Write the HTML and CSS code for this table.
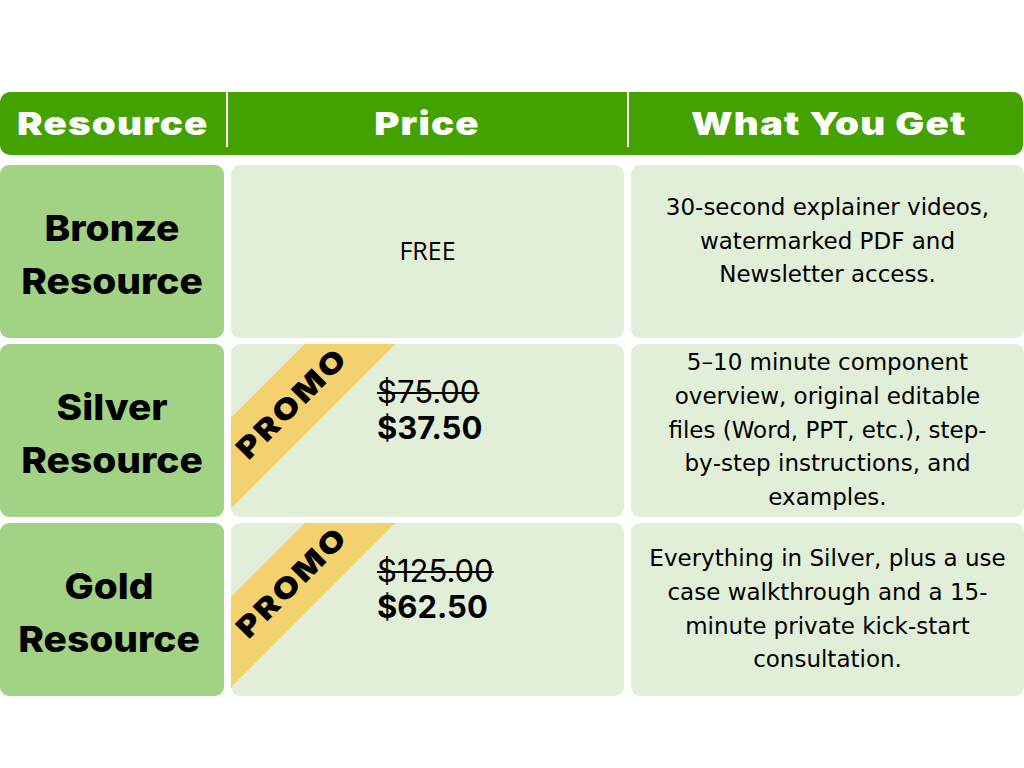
FILE: index.html
```html
<!DOCTYPE html>
<html lang="en">
<head>
<meta charset="utf-8">
<title>Resource Pricing</title>
<link rel="stylesheet" href="styles.css">
</head>
<body>
<div class="table">
  <div class="head">
    <div class="hcell c1"><span>Resource</span></div>
    <div class="divider"></div>
    <div class="hcell c2"><span>Price</span></div>
    <div class="divider"></div>
    <div class="hcell c3"><span>What You Get</span></div>
  </div>

  <div class="row">
    <div class="cell label"><span>Bronze<br>Resource</span></div>
    <div class="cell price center"><span class="free">FREE</span></div>
    <div class="cell desc first">30-second explainer videos, watermarked PDF and Newsletter access.</div>
  </div>

  <div class="row">
    <div class="cell label"><span>Silver<br>Resource</span></div>
    <div class="cell price">
      <div class="ribbon"><span>PROMO</span></div>
      <div class="prices">
        <div class="old">$75.00</div>
        <div class="new">$37.50</div>
      </div>
    </div>
    <div class="cell desc">5–10 minute component overview, original editable<br>files (Word, PPT, etc.), step-by&#8209;step instructions, and examples.</div>
  </div>

  <div class="row">
    <div class="cell label gold"><span>Gold<br>Resource</span></div>
    <div class="cell price">
      <div class="ribbon"><span>PROMO</span></div>
      <div class="prices">
        <div class="old">$125.00</div>
        <div class="new">$62.50</div>
      </div>
    </div>
    <div class="cell desc">Everything in Silver, plus a use case walkthrough and a 15-minute private kick-start consultation.</div>
  </div>
</div>
</body>
</html>
```

FILE: styles.css
```css
* { box-sizing: border-box; }

html, body {
  margin: 0;
  padding: 0;
  background: #ffffff;
}

body {
  width: 1024px;
  height: 768px;
  overflow: hidden;
  font-family: "DejaVu Sans", "Open Sans", sans-serif;
  color: #000;
}

.table {
  padding-top: 92px;
  display: flex;
  flex-direction: column;
  gap: 6px;
}

.head {
  display: flex;
  height: 63px;
  background: #43a200;
  border-radius: 10px;
  margin-bottom: 4px;
  margin-right: 1px;
}

.hcell {
  display: flex;
  align-items: center;
  justify-content: center;
  color: #ffffff;
  font-family: "Inter", "Liberation Sans", sans-serif;
  font-weight: 900;
  font-size: 32px;
  letter-spacing: 1px;
  padding-bottom: 1px;
}

.hcell span {
  display: inline-block;
  transform: scaleX(1.2);
}

.hcell.c1 { width: 226px; }
.hcell.c2 { width: 399px; }
.hcell.c3 { flex: 1; padding-left: 6px; }

.divider {
  width: 2px;
  height: 55px;
  background: #ffffff;
  flex: none;
}

.row {
  display: grid;
  grid-template-columns: 224px 393px 393px;
  column-gap: 7px;
  height: 173px;
}

.cell {
  border-radius: 9px;
  background: #e1efd8;
  display: flex;
  align-items: center;
  justify-content: center;
  text-align: center;
  position: relative;
  overflow: hidden;
}

.cell.label {
  background: #a2d283;
  font-family: "Inter", "Liberation Sans", sans-serif;
  font-weight: 800;
  font-size: 36px;
  line-height: 53px;
  padding-top: 6px;
}

.cell.label span {
  display: inline-block;
  transform: scaleX(1.08);
}

.cell.label.gold { padding-right: 6px; }

.cell.price { justify-content: flex-start; }
.cell.price.center { justify-content: center; }

.free {
  font-family: "Open Sans", sans-serif;
  font-size: 25px;
  padding-bottom: 4px;
}

.desc {
  font-size: 23px;
  line-height: 33.8px;
  padding: 0 16px;
}

.desc.first { padding-bottom: 20px; }

.prices {
  text-align: left;
  font-family: "Inter", "Liberation Sans", sans-serif;
  font-size: 31px;
  line-height: 36px;
  margin-left: 146px;
  margin-bottom: 42px;
}

.old {
  font-weight: 400;
  text-decoration: line-through;
  text-decoration-thickness: 2px;
}

.new {
  font-weight: 700;
}

.ribbon {
  position: absolute;
  left: -91px;
  top: 28px;
  width: 300px;
  height: 64px;
  background: #f4d06f;
  transform: rotate(-45deg);
  display: flex;
  align-items: center;
  justify-content: center;
}

.ribbon span {
  font-family: "Inter", "Liberation Sans", sans-serif;
  font-weight: 900;
  font-size: 29px;
  letter-spacing: 2px;
  transform: scaleX(1.18);
  padding-left: 4px;
}
```
